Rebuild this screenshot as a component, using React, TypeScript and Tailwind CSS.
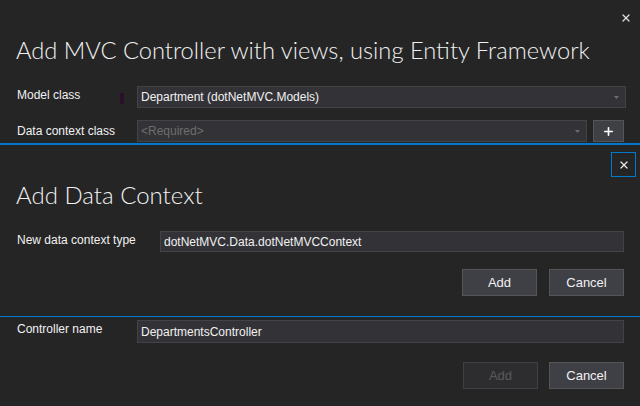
import { X, Plus } from 'lucide-react'

const ui = "font-['Liberation_Sans',Arial,sans-serif]"
const heading = "font-['Lato','Liberation_Sans',sans-serif] font-light"

function Field({ value, placeholder, dropdown, className }: { value?: string; placeholder?: string; dropdown?: boolean; className: string }) {
  return (
    <div className={`flex items-center bg-[#333337] border border-[#434346] pl-[3px] pr-[6px] ${className}`}>
      <span className={`flex-1 text-[12px] truncate ${value ? 'text-[#f1f1f1]' : 'text-[#6d6d6d]'}`}>
        {value ?? placeholder}
      </span>
      {dropdown && (
        <svg width="5" height="3" viewBox="0 0 5 3" className="shrink-0">
          <path d="M0 0h5L2.5 3z" fill="#6d6d6d" />
        </svg>
      )}
    </div>
  )
}

function Btn({ label, disabled }: { label: string; disabled?: boolean }) {
  return (
    <button
      className={`w-[75px] h-[27px] border text-[13px] ${
        disabled
          ? 'bg-[#2d2d30] border-[#3f3f46] text-[#5a5a5a]'
          : 'bg-[#3f3f46] border-[#555555] text-[#f1f1f1]'
      }`}
    >
      {label}
    </button>
  )
}

export default function App() {
  return (
    <div className={`w-[640px] h-[406px] bg-[#252526] text-[#f1f1f1] flex flex-col overflow-hidden ${ui}`}>
      {/* Main dialog header */}
      <div className="h-[143px] flex flex-col shrink-0">
        <div className="flex justify-end pt-[12px] pr-[8px] h-[30px]">
          <X size={12} strokeWidth={2.5} className="text-[#e0e0e0]" />
        </div>
        <h1 className={`pl-[16px] text-[23.7px] leading-[32px] mt-[4px] ${heading}`}>
          Add MVC Controller with views, using Entity Framework
        </h1>
        <div className="flex items-center mt-[20px] h-[22px]">
          <span className="w-[120px] pl-[17px] text-[12px] -mt-[5px]">Model class</span>
          <span className="w-[4px] h-[11px] bg-[#2b0f2b] mt-[3px]" />
          <Field value="Department (dotNetMVC.Models)" dropdown className="ml-[13px] w-[489px] h-[22px]" />
        </div>
        <div className="flex items-center mt-[12px] h-[22px]">
          <span className="w-[137px] pl-[17px] text-[12px] -mt-[1px]">Data context class</span>
          <Field placeholder="<Required>" dropdown className="w-[450px] h-[22px]" />
          <button className="ml-[6px] w-[31px] h-[22px] bg-[#3f3f46] border border-[#555555] flex items-center justify-center">
            <Plus size={13} strokeWidth={3} className="text-white" />
          </button>
        </div>
      </div>

      {/* Add Data Context panel */}
      <div className="h-[174px] border-t-2 border-b border-[#007acc] flex flex-col shrink-0">
        <div className="flex justify-end pr-[4px] pt-[7px]">
          <button className="w-[25px] h-[25px] border border-[#007acc] flex items-center justify-center">
            <X size={12} strokeWidth={2.5} className="text-[#e8e8e8]" />
          </button>
        </div>
        <h2 className={`pl-[16px] text-[24px] leading-[32px] mt-[2px] ${heading}`}>Add Data Context</h2>
        <div className="flex items-center mt-[20px]">
          <span className="w-[160px] pl-[17px] text-[12px] -mt-[3px]">New data context type</span>
          <Field value="dotNetMVC.Data.dotNetMVCContext" className="w-[464px] h-[21px]" />
        </div>
        <div className="flex justify-end gap-[12px] pr-[16px] mt-[17px]">
          <Btn label="Add" />
          <Btn label="Cancel" />
        </div>
      </div>

      {/* Controller name */}
      <div className="flex flex-col">
        <div className="flex items-center mt-[3px]">
          <span className="w-[137px] pl-[17px] text-[12px] -mt-[5px]">Controller name</span>
          <Field value="DepartmentsController" className="w-[487px] h-[23px]" />
        </div>
        <div className="flex justify-end gap-[11px] pr-[16px] mt-[19px]">
          <Btn label="Add" disabled />
          <Btn label="Cancel" />
        </div>
      </div>
    </div>
  )
}
